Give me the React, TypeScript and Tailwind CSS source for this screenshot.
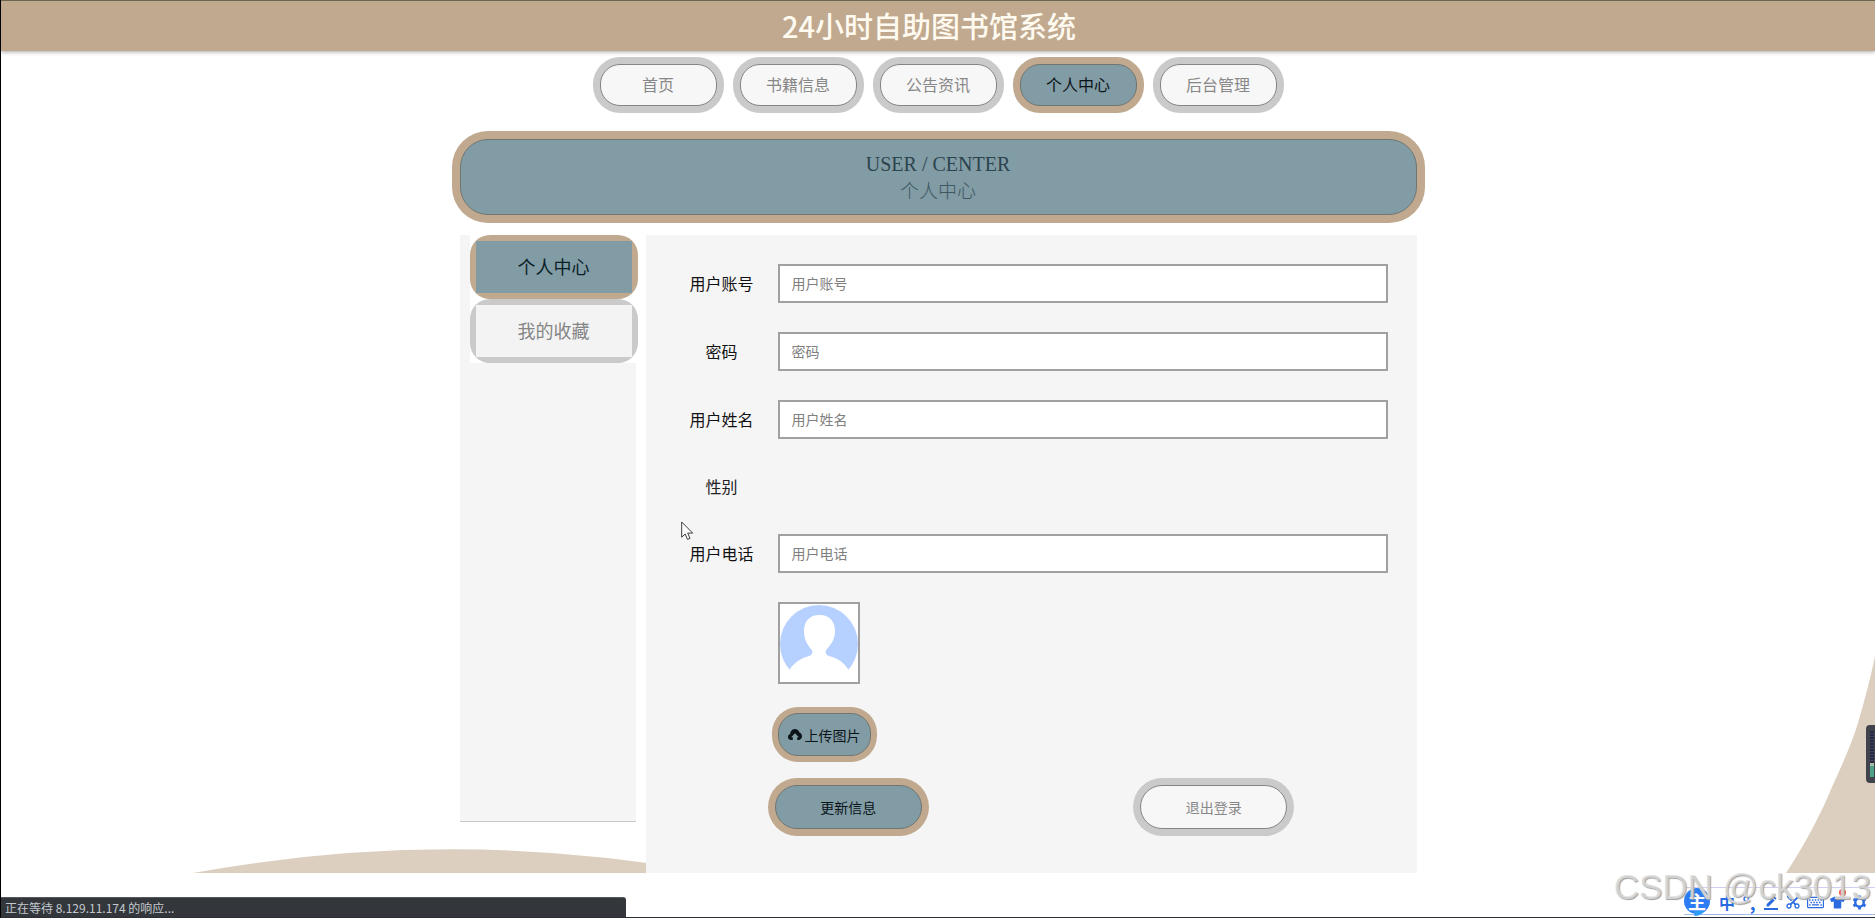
import { useState } from "react";
import clsx from "clsx";
import { FaRegKeyboard, FaTshirt } from "react-icons/fa";
import { MdContentCut, MdEdit } from "react-icons/md";

type Field = {
  id: string;
  label: string;
  type?: string;
  inputless?: boolean;
};

const NAV_ITEMS = ["首页", "书籍信息", "公告资讯", "个人中心", "后台管理"];

const SIDE_ITEMS = ["个人中心", "我的收藏"];

const FIELDS: Field[] = [
  { id: "account", label: "用户账号" },
  { id: "password", label: "密码", type: "password" },
  { id: "name", label: "用户姓名" },
  { id: "gender", label: "性别", inputless: true },
  { id: "phone", label: "用户电话", type: "tel" }
];

const pillActive = "border-[#6f7672] bg-[#829ca5] text-[#0b1418] ring-[#c0a98f]";
const pillIdle = "border-[#858585] bg-[#f7f7f7] text-[#888888] ring-[#cacaca]";

function TopNav() {
  return (
    <nav className="flex flex-wrap justify-center gap-[23px] pt-[13px]">
      {NAV_ITEMS.map((item) => (
        <a
          key={item}
          href="#"
          className={clsx(
            "flex h-[42px] w-[117px] items-center justify-center rounded-[20px] border pb-[2px] text-base ring-7",
            item === "个人中心" ? pillActive : pillIdle
          )}
        >
          {item}
        </a>
      ))}
    </nav>
  );
}

function Sidebar() {
  return (
    <aside className="min-h-[587px] w-44 shrink-0 self-start border-b border-[#c8caca] bg-[#f5f5f5] pl-[10px]">
      {SIDE_ITEMS.map((item, index) => (
        <div key={item} className="w-[168px] bg-white">
          <a
            href="#"
            className={clsx(
              "block h-16 rounded-[20px] p-[6px] text-lg",
              index === 0 ? "bg-[#c0a98f] text-[#0b1f28]" : "bg-[#cacaca] text-[#858585]"
            )}
          >
            <span
              className={clsx(
                "flex h-full items-center justify-center pb-[2px]",
                index === 0 ? "bg-[#829ca5]" : "bg-[#f3f3f3]"
              )}
            >
              {item}
            </span>
          </a>
        </div>
      ))}
    </aside>
  );
}

function Avatar() {
  return (
    <svg viewBox="0 0 78 78" className="size-full" aria-hidden="true">
      <circle cx="39" cy="40" r="39" fill="#b6d0ff" />
      <path
        d="M39 11c-9 0-15 6-15 16 0 9 4 15 8 19 1 3 0 5-3 6-8 2-15 7-19 13v13h58V65c-4-6-10-11-19-13-3-1-4-3-3-6 4-4 9-10 9-19 0-10-6-16-15-16z"
        fill="#fff"
      />
      <path d="M0 66h78v12H0z" fill="#fff" />
    </svg>
  );
}

function UploadIcon() {
  return (
    <svg viewBox="0 0 14 11" className="h-[11px] w-[14px]" aria-hidden="true">
      <path
        d="M3.4 11C1.4 11 0 9.6 0 7.9c0-1.4.9-2.5 2.2-2.9C2.3 2.200 4.300 0 6.900 0c2.200 0 4 1.400 4.500 3.500C12.900 3.900 14 5.500 14 7.300 14 9.300 12.500 11 10.600 11H9.200V8.200h1.700L7 4.200l-3.900 4h1.700V11z"
        fill="currentColor"
      />
    </svg>
  );
}

function Cursor() {
  return (
    <svg viewBox="0 0 13 20" className="absolute top-[286px] left-[35px] h-5 w-[13px]" aria-hidden="true">
      <path
        d="M.7 1v15.200l3.500-3.200 2.300 5.400 2.500-1-2.300-5.300h5z"
        fill="#fff"
        stroke="#3c3c3c"
        strokeWidth="1"
      />
    </svg>
  );
}

function ProfileForm() {
  const [values, setValues] = useState<Record<string, string>>({});

  return (
    <form
      className="relative flex min-w-0 flex-1 flex-col gap-[29px] bg-[#f5f5f5] px-5 pt-[29px] pb-11"
      onSubmit={(event) => event.preventDefault()}
    >
      {FIELDS.map((field) =>
        field.inputless ? (
          <div key={field.id} className="flex h-[37px] items-center">
            <span className="w-28 pb-[2px] text-center text-base text-[#222222]">{field.label}</span>
          </div>
        ) : (
          <div key={field.id} className="flex items-center pr-[9px]">
            <label htmlFor={field.id} className="w-28 pb-[2px] text-center text-base text-[#111111]">
              {field.label}
            </label>
            <input
              id={field.id}
              type={field.type ?? "text"}
              placeholder={field.label}
              value={values[field.id] ?? ""}
              onChange={(event) => setValues({ ...values, [field.id]: event.target.value })}
              className="h-[39px] min-w-0 flex-1 border-2 border-[#a0a0a0] bg-white px-3 pb-[2px] text-sm placeholder:text-[#808080] focus:outline-none"
            />
          </div>
        )
      )}

      <div className="ml-28 size-[82px] border-2 border-[#a0a0a0] bg-white">
        <Avatar />
      </div>

      <button
        type="button"
        className={clsx(
          "ml-28 flex h-[43px] w-[93px] items-center justify-center gap-[3px] rounded-[20px] border text-sm ring-6",
          pillActive
        )}
      >
        <UploadIcon />
        上传图片
      </button>

      <div className="grid grid-cols-2 justify-items-center">
        <button
          type="submit"
          className={clsx("h-11 w-[147px] rounded-[22px] border text-sm ring-7", pillActive)}
        >
          更新信息
        </button>
        <button
          type="button"
          className={clsx("h-11 w-[147px] rounded-[22px] border text-sm ring-7", pillIdle)}
        >
          退出登录
        </button>
      </div>

      <Cursor />
    </form>
  );
}

function StatusBar() {
  return (
    <div className="absolute bottom-0 left-0 flex h-5 w-1/3 items-center rounded-tr-[3px] border-t border-[#55585c] bg-[#33363a] pl-1 text-xs text-[#c3c9cf]">
      正在等待 8.129.11.174 的响应...
    </div>
  );
}

function LevelMeter() {
  return (
    <div className="absolute right-0 bottom-[134px] h-[58px] w-[9px] rounded-l-[4px] bg-[#40434c] py-[6px] pl-1">
      <svg viewBox="0 0 4 46" className="h-full w-1" aria-hidden="true">
        <path d="M2 0v32" stroke="#252b48" strokeWidth="4" strokeDasharray="2 1" />
        <path d="M2 32v3" stroke="#a9b8a8" strokeWidth="4" />
        <path d="M2 35v11" stroke="#4fa088" strokeWidth="4" />
      </svg>
    </div>
  );
}

const imeCell = "flex w-[22px] flex-col items-center justify-center pt-[2px]";

function InputMethodBar() {
  return (
    <div className="absolute right-0 bottom-[2px] flex h-7 items-center border-y border-t-[#cfcff5] border-b-[#9fbbe8] bg-white pr-[5px] text-[#2a6be0]">
      <span className="relative mr-[6px] flex size-[26px] items-center justify-center rounded-full bg-[#2b7cf5] text-lg leading-none font-bold text-white">
        <svg viewBox="0 0 12 5" className="absolute bottom-[-2px] left-[9px] h-[5px] w-3" aria-hidden="true">
          <path d="M0 0h12C9 3 6 5 1 5c1-2 1-3-1-5z" fill="#2b9cf8" />
        </svg>
        <span className="relative">主</span>
      </span>
      <span className={clsx(imeCell, "text-base leading-none font-bold")}>中</span>
      <span className={clsx(imeCell, "text-lg leading-none font-bold")}>°,</span>
      <span className={imeCell}>
        <MdEdit className="size-[13px]" />
        <span className="h-[2px] w-[14px] bg-[#2a6be0]" />
      </span>
      <span className={imeCell}>
        <MdContentCut className="size-4 -rotate-90" />
      </span>
      <span className={imeCell}>
        <FaRegKeyboard className="size-[17px]" />
      </span>
      <span className={clsx(imeCell, "relative")}>
        <FaTshirt className="size-[15px]" />
        <span className="absolute -top-1 right-[2px] size-[7px] rounded-full bg-[#f4552f]" />
      </span>
      <span className={imeCell}>
        <svg viewBox="0 0 16 16" className="size-[15px]" fill="none" stroke="currentColor" aria-hidden="true">
          <circle cx="8" cy="8" r="4.500" strokeWidth="2.600" />
          <path
            d="M8 .6v2.600M8 12.800v2.600M1.600 4.300l2.200 1.300M12.200 10.400l2.200 1.300M1.600 11.700l2.200-1.300M12.200 5.600l2.200-1.300"
            strokeWidth="3"
          />
        </svg>
      </span>
    </div>
  );
}

export default function App() {
  return (
    <div className="relative min-h-screen overflow-hidden border-b border-l border-b-[#2b3038] border-l-black bg-white font-['Noto_Sans_CJK_SC',sans-serif]">
      <header className="relative z-10 flex h-[51px] items-center justify-center border-t border-[#6b6650] bg-[#c0a98f] pr-[18px] pb-[2px] shadow-[0_1px_4px_rgba(0,0,0,0.35)]">
        <h1 className="text-[29px] leading-none font-medium text-[#fffaf0]">24小时自助图书馆系统</h1>
      </header>

      <main className="relative isolate">
        <svg
          viewBox="0 0 518 24"
          className="absolute bottom-0 left-48 -z-10 h-6 w-[518px]"
          aria-hidden="true"
        >
          <path d="M0 24A1440 1440 0 0 1 518 24z" fill="#dccfbf" />
        </svg>
        <svg
          viewBox="0 0 89 217"
          className="absolute right-0 bottom-0 -z-10 h-[217px] w-[89px]"
          aria-hidden="true"
        >
          <path d="M0 217C18 190 34 160 46 131 56 109 66 87 72 67 79 43 85 20 89 0v217z" fill="#dccfbf" />
        </svg>

        <TopNav />

        <div className="mx-auto w-full max-w-[957px]">
          <section className="mt-[33px] flex h-[76px] flex-col items-center justify-center rounded-[28px] border border-[#6f7672] bg-[#829ca5] ring-8 ring-[#c0a98f]">
            <p className="font-['Liberation_Serif',serif] text-xl leading-[26px] text-[#2c444e]">
              USER / CENTER
            </p>
            <h2 className="text-[19px] leading-[26px] font-light text-[#405862]">个人中心</h2>
          </section>

          <div className="mt-5 flex gap-[10px]">
            <Sidebar />
            <ProfileForm />
          </div>
        </div>
      </main>

      <LevelMeter />
      <StatusBar />
      <InputMethodBar />
      <div className="pointer-events-none absolute right-1 bottom-[10px] font-['Liberation_Sans',sans-serif] text-[35px] leading-10 text-[#dedede]/80 [text-shadow:1px_1px_1px_#a0a0a0]">
        CSDN @ck3013
      </div>
    </div>
  );
}
